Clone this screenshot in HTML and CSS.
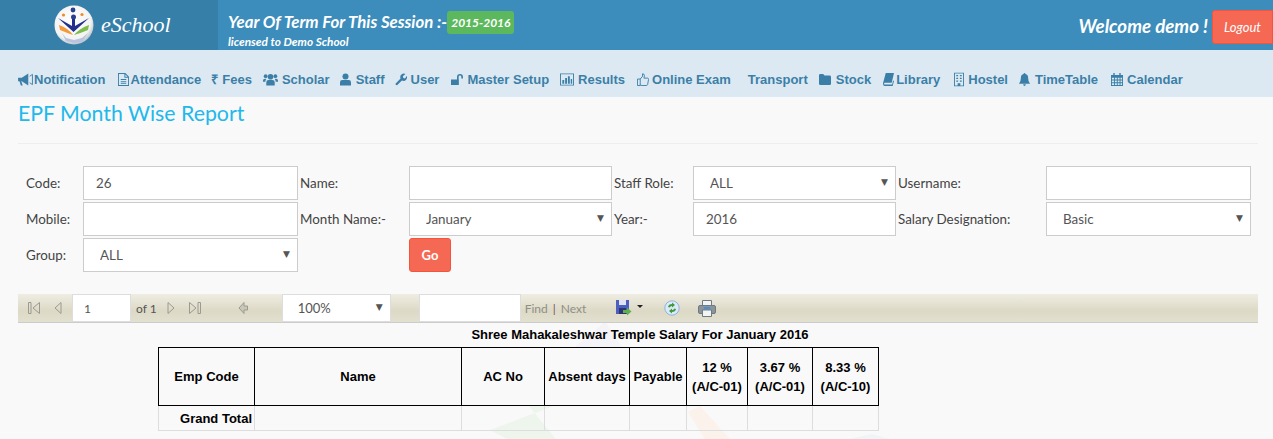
FILE: index.html
```html
<!DOCTYPE html>
<html lang="en">
<head>
<meta charset="utf-8">
<title>EPF Month Wise Report</title>
<link rel="stylesheet" href="styles.css">
</head>
<body>
<svg class="watermark" viewBox="0 0 1273 439" aria-hidden="true">
  <path d="M490 430 L556 405 L528 405 L556 439 H507 Z" fill="#edf5ed"/>
  <path d="M688 412 L700 406 L730 439 H705 Z" fill="#fcf2ec"/>
  <path d="M575 347 L605 322 L622 347 Z" fill="#f3f3f8"/>
  <path d="M848 439 L872 434 L890 439 Z" fill="#eef5f9"/>
</svg>
<header class="top">
  <div class="brand">
    <svg class="logo" viewBox="0 0 40 40" aria-hidden="true">
      <defs><radialGradient id="lg" cx="45%" cy="40%" r="60%"><stop offset="0" stop-color="#ffffff"/><stop offset="0.8" stop-color="#f3f3f3"/><stop offset="1" stop-color="#b9c4cc"/></radialGradient></defs>
      <circle cx="20" cy="20" r="19.5" fill="url(#lg)"/>
      <circle cx="19" cy="5" r="2.4" fill="#2a3f8f"/>
      <circle cx="9.5" cy="10" r="1.6" fill="#f08a2c"/>
      <circle cx="28" cy="9.5" r="1.6" fill="#f08a2c"/>
      <circle cx="19.5" cy="12" r="2.5" fill="#2a3f8f"/>
      <path d="M4 13 L19.5 27 L35 13 L21 21 V14 H18 V21 Z" fill="#22308c"/>
      <path d="M5 20 Q14 23 19 30 Q13 28 6 25 Z" fill="#f39a3a"/>
      <path d="M35 20 Q26 23 20 30 Q27 28 34 25 Z" fill="#7dbd4b"/>
      <path d="M8 28 L12 36 L20 38 L28 37 L34 28 L28 33 L20 35 L12 33 Z" fill="#b9c3dd"/>
    </svg>
    <span class="brand-name">eSchool</span>
  </div>
  <div class="session">
    <div class="session-line"><span>Year Of Term For This Session :-</span><span class="term">2015-2016</span></div>
    <div class="licence">licensed to Demo School</div>
  </div>
  <div class="welcome">Welcome demo !</div>
  <a class="logout">Logout</a>
</header>

<nav class="menu">
  <a class="item tight"><svg class="ic w15" viewBox="0 0 16 14"><path d="M0 5h4l7-4.500v13L4 9H3.500L5 13.500H3L1.500 9H0z"/><path d="M12.500 3.500L15.500 1.500V12.500L12.500 10.500" fill="none" stroke="#3b7fa8" stroke-width="1"/></svg>Notification</a>
  <a class="item"><svg class="ic w11" viewBox="0 0 12 14"><path fill-rule="evenodd" d="M0 0h8l4 4v10H0zM1 1v12h10V5H7V1zM8 1.500V4h2.500zM3 6.500h6v1H3zM3 8.500h6v1H3zM3 10.500h6v1H3z"/></svg>Attendance</a>
  <a class="item nudge2 gap3"><span class="rupee">₹</span>Fees</a>
  <a class="item gap4 nudge1"><svg class="ic w15" viewBox="0 0 16 13"><circle cx="8" cy="3.500" r="3"/><circle cx="2.800" cy="3" r="2"/><circle cx="13.200" cy="3" r="2"/><path d="M3.500 13V9.500Q3.500 7 6 7h4q2.500 0 2.500 2.500V13zM0 9V7.500Q0 5.700 2 5.700h1.500Q2.500 7 2.500 9zM16 9V7.500q0-1.800-2-1.800h-1.500q1 1.300 1 3.300z"/></svg>Scholar</a>
  <a class="item gap5 nudge2"><svg class="ic w11" viewBox="0 0 12 13"><circle cx="6" cy="3.300" r="3.300"/><path d="M0 13V9.500Q0 7 2.500 7h7Q12 7 12 9.500V13z"/></svg>Staff</a>
  <a class="item gap4 nudge2"><svg class="ic w12" viewBox="0 0 13 13"><path d="M1 12.500L.5 11 6 5.500Q5 2.500 7 1t4.300-.5L8.500 3l.5 1.800 1.800.5L13 2.500q.5 2.800-1.200 4.500T7.500 7.500L2.200 12.800z"/></svg>User</a>
  <a class="item gap4"><svg class="ic w12" viewBox="0 0 13 12"><path d="M0 6h8.500v6H0zM6.500 6V3.300Q6.500 0 9.700 0 13 0 13 3.300V5h-1.800V3.300q0-1.500-1.500-1.500T8.300 3.300V6z"/></svg>Master Setup</a>
  <a class="item gap4 nudge1"><svg class="ic w14" viewBox="0 0 15 13"><path fill-rule="evenodd" d="M0 0h15v13H0zM1 1v11h13V1zM2.500 7h2v4h-2zM5.500 5h2v6h-2zM8.500 3h2v8h-2zM11.500 6h1.500v5h-1.500z"/></svg>Results</a>
  <a class="item gap3"><svg class="ic w12" viewBox="0 0 13 14"><path d="M.5 6.500h3V13.500h-3z" fill="none" stroke="#3b7fa8"/><path d="M3.500 6.500L6 3.500V.8Q8 .5 8 3L7.500 5.500h4q1.200.2 1 1.500l-1 5.500q-.3 1-1.500 1H5.500L3.500 13" fill="none" stroke="#3b7fa8"/></svg>Online Exam</a>
  <a class="item transport">Transport</a>
  <a class="item gap5 nudge1"><svg class="ic w12" viewBox="0 0 13 12"><path d="M0 1.500Q0 0 1.500 0h3L6 1.800h5.500Q13 1.800 13 3.300v7.200q0 1.500-1.500 1.500h-10Q0 12 0 10.500z"/></svg>Stock</a>
  <a class="item"><svg class="ic w11" viewBox="0 0 12 14"><path d="M3 0h9l-2.500 10.500H2q-1 0-.8 1T2.500 12.500H10l1-4.500 1 .5-1.500 5.500H2Q0 14 0 11.500 0 11 .3 10z"/></svg>Library</a>
  <a class="item gap4 push2"><svg class="ic w10" viewBox="0 0 11 15"><path fill-rule="evenodd" d="M0 0h11v15H0zM1 1v13h3v-2.500h3V14h3V1zM2.500 2.500h2v1.500h-2zM6.500 2.500h2v1.500h-2zM2.500 5.500h2v1.500h-2zM6.500 5.500h2v1.500h-2zM2.500 8.500h2v1.500h-2zM6.500 8.500h2v1.500h-2z"/></svg>Hostel</a>
  <a class="item gap5 nudge1"><svg class="ic w11" viewBox="0 0 12 14"><path d="M6 0q1 0 1 1 3 .7 3 4.500 0 4 2 6H0q2-2 2-6Q2 1.700 5 1q0-1 1-1zM4.500 12.300h3Q7.300 14 6 14T4.500 12.300z"/></svg>TimeTable</a>
  <a class="item gap4 push1"><svg class="ic w12" viewBox="0 0 13 14"><path fill-rule="evenodd" d="M0 2h2.500V0h1.500v2h5V0h1.500v2H13v12H0zM1 5v2h2.300V5zM4.300 5v2h2V5zM7.300 5v2h2V5zM10.300 5v2H12V5zM1 8v2h2.300V8zM4.300 8v2h2V8zM7.300 8v2h2V8zM10.300 8v2H12V8zM1 11v2h2.300v-2zM4.300 11v2h2v-2zM7.300 11v2h2v-2zM10.300 11v2H12v-2z"/></svg>Calendar</a>
</nav>

<main class="content">
  <h1 class="title">EPF Month Wise Report</h1>
  <form class="filters">
    <label class="lbl">Code:</label><input class="field" type="text" value="26">
    <label class="lbl">Name:</label><input class="field" type="text">
    <label class="lbl">Staff Role:</label><span class="pick"><select class="field choice"><option>ALL</option></select></span>
    <label class="lbl">Username:</label><input class="field" type="text">

    <label class="lbl">Mobile:</label><input class="field" type="text">
    <label class="lbl">Month Name:-</label><span class="pick"><select class="field choice"><option>January</option></select></span>
    <label class="lbl">Year:-</label><input class="field" type="text" value="2016">
    <label class="lbl">Salary Designation:</label><span class="pick"><select class="field choice"><option>Basic</option></select></span>

    <label class="lbl">Group:</label><span class="pick"><select class="field choice"><option>ALL</option></select></span>
    <span></span><div><button class="go" type="button">Go</button></div>
  </form>

  <div class="viewer">
    <svg class="tb first" viewBox="0 0 14 14"><path d="M1.500 1.500h2.500v11H1.500zM12.500 1.500v11L6 7z" fill="none" stroke="#9a9a90"/></svg>
    <svg class="tb prev" viewBox="0 0 10 14"><path d="M8 1.500v11L2 7z" fill="none" stroke="#9a9a90"/></svg>
    <input class="page-box" type="text" value="1">
    <span class="of">of 1</span>
    <svg class="tb next" viewBox="0 0 10 14"><path d="M2 1.500v11L8 7z" fill="none" stroke="#9a9a90"/></svg>
    <svg class="tb last" viewBox="0 0 14 14"><path d="M1.500 1.500v11L8 7zM10 1.500h2.500v11H10z" fill="none" stroke="#9a9a90"/></svg>
    <svg class="tb back" viewBox="0 0 11 14"><path d="M6 1.500v3.500h3.500v4H6v3.500L1 7z" fill="#c9c7b7" stroke="#9a9a90"/></svg>
    <span class="pick zoom-pick"><select class="zoom-box"><option>100%</option></select></span>
    <input class="find-box" type="text">
    <span class="find">Find</span><span class="sep">|</span><span class="find">Next</span>
    <svg class="tb save" viewBox="0 0 16 17"><path d="M0 0h13v14H0z" fill="#4a5fc0"/><path d="M3 0h7v5H3z" fill="#dfe4f5"/><path d="M3 8h7v6H3z" fill="#2c3570"/><path d="M7 10h4V7.500l4.500 4-4.500 4V13H7z" fill="#62b04a"/></svg>
    <span class="caret"></span>
    <svg class="tb refresh" viewBox="0 0 16 16"><circle cx="8" cy="8" r="7.200" fill="#dbe9f8" stroke="#8db4e0"/><path d="M4 7q.5-3 4-3V2.500L11 5 8 7.500V6Q6 6 6 7.500zM12 9q-.5 3-4 3v1.500L5 11l3-2.500V10q2 0 2-1.500z" fill="#3f9a3f"/></svg>
    <svg class="tb print" viewBox="0 0 18 17"><path d="M4.500 .5h9v6h-9z" fill="#f4f4f4" stroke="#6f7a82"/><rect x="0.500" y="5.500" width="17" height="8" rx="1.500" fill="#8a949c" stroke="#6f7a82"/><path d="M4.500 10h9v6.500h-9z" fill="#f4f4f4" stroke="#6f7a82"/><rect x="6" y="7" width="6" height="2" fill="#4c8fd0"/></svg>
  </div>

  <h2 class="report-title">Shree Mahakaleshwar Temple Salary For January 2016</h2>
  <table class="report">
    <colgroup>
      <col class="c1"><col class="c2"><col class="c3"><col class="c4"><col class="c5"><col class="c6"><col class="c7"><col class="c8">
    </colgroup>
    <thead>
      <tr><th>Emp Code</th><th>Name</th><th>AC No</th><th>Absent days</th><th>Payable</th><th>12 %<br>(A/C-01)</th><th>3.67 %<br>(A/C-01)</th><th>8.33 %<br>(A/C-10)</th></tr>
    </thead>
    <tbody>
      <tr><td class="total">Grand Total</td><td></td><td></td><td></td><td></td><td></td><td></td><td></td></tr>
    </tbody>
  </table>
</main>
</body>
</html>
```
FILE: styles.css
```css
* { box-sizing: border-box; }
html, body { margin: 0; height: 100%; overflow: hidden; }
body { background: #f9f9f9; font-family: "Lato", "Noto Sans", sans-serif; color: #444; position: relative; }
.watermark { position: absolute; left: 0; top: 0; width: 1273px; height: 439px; }

.top { position: relative; display: flex; height: 50px; background: #3c8dbc; color: #fff; }
.brand { width: 218px; background: #367fa9; display: flex; align-items: center; padding-left: 54px; gap: 7px; }
.logo { width: 40px; height: 40px; }
.brand-name { font: italic 22px "Liberation Serif", serif; }
.session { padding: 10px 0 0 10px; font-weight: 700; font-style: italic; flex: 1; }
.session-line { display: flex; align-items: center; font-size: 16.8px; line-height: 24px; gap: 0; }
.term { background: #5cb85c; font-size: 12px; line-height: 23px; padding: 0 4px; border-radius: 3px; }
.licence { font-size: 11.8px; line-height: 14px; margin-top: 1px; }
.welcome { font-weight: 700; font-style: italic; font-size: 18.7px; line-height: 52px; margin-right: 4px; }
.logout { background: #f56954; border: 1px solid #f4543c; border-radius: 3px 0 0 3px; width: 61px; height: 34px; margin-top: 10px; font-style: italic; font-size: 13px; line-height: 33px; text-align: center; }

.menu { display: flex; align-items: center; height: 47px; background: #dce9f2; padding: 11px 0 0 18px; gap: 12px; }
.item { display: flex; align-items: center; gap: 2px; font: 700 13px "Liberation Sans", sans-serif; color: #3b7fa8; white-space: nowrap; }
.tight { gap: 1px; }
.gap3 { gap: 3px; }
.gap4 { gap: 4px; }
.gap5 { gap: 5px; }
.nudge1 { margin-left: -1px; }
.nudge2 { margin-left: -2px; }
.push1 { margin-left: 1px; }
.push2 { margin-left: 2px; }
.ic { fill: #3b7fa8; height: 13px; flex: none; }
.w10 { width: 10px; height: 15px; }
.w11 { width: 11px; }
.w12 { width: 12px; }
.w14 { width: 14px; }
.w15 { width: 15px; }
.rupee { width: 8px; }
.transport { margin-left: 5px; }

.content { position: relative; padding: 0 15px 0 18px; }
.title { margin: 0; font-size: 21.3px; font-weight: 400; line-height: 33px; color: #22b8ec; border-bottom: 1px solid #eee; height: 47px; }
.filters { display: grid; grid-template-columns: 55px 215px 107px 203px 77px 203px 146px 205px; gap: 2px; margin: 22px 0 0 8px; align-items: center; }
.lbl { font-size: 13.4px; line-height: 34px; color: #444; white-space: nowrap; }
.field { display: block; width: 100%; height: 34px; border: 1px solid #ccc; background: #fff; padding: 0 12px; font: 13.4px "Lato", "Noto Sans", sans-serif; color: #555; border-radius: 0; outline: none; }
.choice { appearance: none; padding-left: 16px; }
.pick { position: relative; display: block; }
.pick::after { content: "▼"; position: absolute; right: 8px; top: 50%; margin-top: -7px; font: 9px/12px "DejaVu Sans", sans-serif; color: #555; }
.go { width: 42px; height: 34px; background: #f56954; border: 1px solid #f4543c; border-radius: 3px; color: #fff; font: 700 13px "Lato", sans-serif; padding: 0; }

.viewer { display: flex; align-items: center; height: 29px; margin: 22px 0 0 0; background: linear-gradient(#efede2, #dcd9c6 60%, #e2e0cf); border-bottom: 1px solid #ccc; font-size: 12px; color: #666; }
.tb { height: 14px; flex: none; }
.first { width: 14px; margin-left: 9px; }
.prev { width: 10px; margin-left: 12px; }
.page-box { width: 59px; height: 28px; margin-left: 9px; border: 1px solid #ddd; background: #fff; padding: 0 11px; font: 12px "Lato", sans-serif; color: #555; }
.of { margin-left: 5px; color: #555; }
.next { width: 10px; margin-left: 9px; }
.last { width: 14px; margin-left: 12px; }
.back { width: 11px; margin-left: 36px; }
.zoom-pick { margin-left: 33px; }
.zoom-box { appearance: none; display: block; width: 109px; height: 28px; border: 1px solid #ddd; background: #fff; padding: 0 15px; font: 13px "Lato", sans-serif; color: #555; border-radius: 0; }
.find-box { width: 102px; height: 28px; margin-left: 28px; border: 1px solid #ddd; background: #fff; }
.find { color: #8f8f86; }
.find-box + .find { margin-left: 4px; }
.sep { margin: 0 5px; color: #7a5560; }
.save { width: 16px; height: 17px; margin-left: 30px; }
.caret { width: 0; height: 0; margin-left: 5px; border: 3px solid transparent; border-top: 3px solid #222; border-bottom: 0; margin-top: -3px; }
.refresh { width: 16px; height: 16px; margin-left: 21px; }
.print { width: 18px; height: 17px; margin-left: 18px; }

.report-title { margin: 4px 0 0; padding-left: 4px; font: 700 13px/15px "Liberation Sans", sans-serif; color: #000; text-align: center; }
.report { position: relative; margin: 5px 0 0 140px; width: 720px; table-layout: fixed; border-collapse: collapse; font: 700 13px/19px "Liberation Sans", sans-serif; color: #000; }
.c1 { width: 96px; } .c2 { width: 207px; } .c3 { width: 83px; } .c4 { width: 85px; }
.c5 { width: 57px; } .c6 { width: 61px; } .c7 { width: 65px; } .c8 { width: 66px; }
.report th { border: 1px solid #000; height: 58px; padding: 0; text-align: center; font-weight: 700; }
.report td { border: 1px solid #ddd; height: 25px; padding: 0 2px; }
.report .total { text-align: right; }
```
